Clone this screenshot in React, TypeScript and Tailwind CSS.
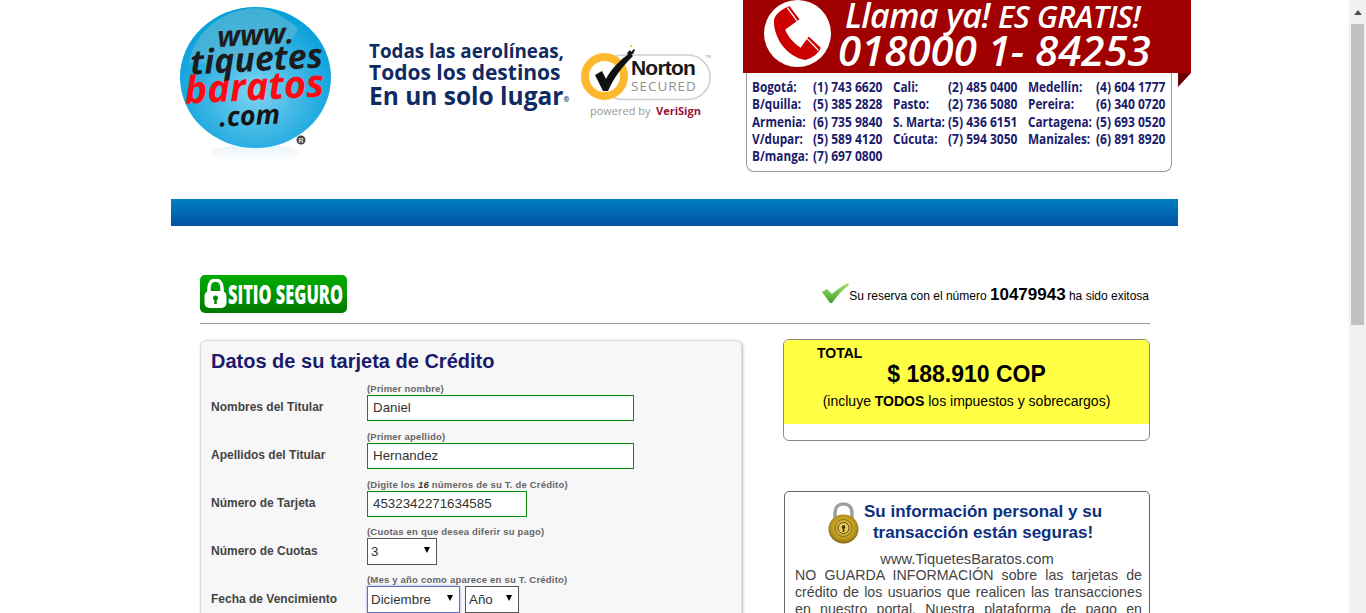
import React from 'react';

const phones = [
  ['Bogotá:', '(1) 743 6620', 'Cali:', '(2) 485 0400', 'Medellín:', '(4) 604 1777'],
  ['B/quilla:', '(5) 385 2828', 'Pasto:', '(2) 736 5080', 'Pereira:', '(6) 340 0720'],
  ['Armenia:', '(6) 735 9840', 'S. Marta:', '(5) 436 6151', 'Cartagena:', '(5) 693 0520'],
  ['V/dupar:', '(5) 589 4120', 'Cúcuta:', '(7) 594 3050', 'Manizales:', '(6) 891 8920'],
  ['B/manga:', '(7) 697 0800'],
];

function Logo() {
  return (
    <svg width="165" height="165" viewBox="175 0 165 165" className="shrink-0">
      <defs>
        <radialGradient id="globe" cx="50%" cy="60%" r="58%">
          <stop offset="0%" stopColor="#7fd4f2" />
          <stop offset="65%" stopColor="#2fb0e2" />
          <stop offset="100%" stopColor="#05a0d8" />
        </radialGradient>
        <linearGradient id="shine" x1="0" y1="0" x2="0" y2="1">
          <stop offset="0%" stopColor="#e8f4f9" />
          <stop offset="100%" stopColor="#ffffff" />
        </linearGradient>
      </defs>
      <ellipse cx="255" cy="153" rx="44" ry="8" fill="url(#shine)" />
      <ellipse cx="255.5" cy="77.5" rx="75.5" ry="70.5" fill="url(#globe)" />
      <path d="M189 62 C196 30 222 10 255 8 C274 8 290 22 298 28 C292 50 262 52 240 58 C220 63 200 66 189 62Z" fill="#58b6d6" opacity="0.7" />
      <g fontFamily="'Open Sans',sans-serif" fontStyle="italic" textAnchor="middle">
        <text x="256" y="45" fontSize="29" fontWeight="700" fill="#1c1c1c" transform="rotate(-3 256 45)">www.</text>
        <text x="257" y="71" fontSize="34" fontWeight="700" fill="#1c1c1c" transform="rotate(-3 257 71)">tiquetes</text>
        <text x="255" y="100" fontSize="38" fontWeight="700" fill="#ff0a12" transform="rotate(-3 255 100)">baratos</text>
        <text x="250" y="125" fontSize="27" fontWeight="700" fill="#151515" transform="rotate(-3 250 125)">.com</text>
      </g>
      <circle cx="301" cy="140" r="4.500" fill="#444" />
      <text x="301" y="142.500" textAnchor="middle" fontSize="7" fontWeight="700" fontFamily="'Liberation Sans',sans-serif" fill="#ddd">R</text>
    </svg>
  );
}

function NortonSeal() {
  return (
    <svg width="132" height="76" viewBox="581 43 132 76" className="shrink-0">
      <rect x="601" y="55" width="109" height="44.500" rx="22" fill="#fff" stroke="#cfcfcf" strokeWidth="1.600" />
      <circle cx="604.500" cy="76.500" r="19.500" fill="#fff" stroke="#fdb92e" strokeWidth="8" />
      <path d="M595 75 L602 71 L606 79 C611 69 620 60 630 53 L633 56 C623 66 614 77 608 91 L603 91Z" fill="#111" />
      <path d="M627 53 l3-3 l1 2 l3-3 l1 1 l-2 4 l-3 1 l-1 1Z" fill="#111" />
      <circle cx="631" cy="46" r="1" fill="#e8b020" />
      <text x="631" y="75" fontFamily="'Liberation Sans',sans-serif" fontWeight="700" fontSize="21" letterSpacing="-0.800" fill="#1a1a1a">Norton</text>
      <text x="631" y="91" fontFamily="'Open Sans',sans-serif" fontSize="13.500" letterSpacing="1" fill="#8f8f8f">SECURED</text>
      <text x="705" y="58" fontFamily="'Liberation Sans',sans-serif" fontSize="4" fill="#999">TM</text>
      <text x="590" y="115" fontFamily="'Open Sans',sans-serif" fontSize="11" fill="#9a9a9a">powered by</text>
      <text x="656" y="115" fontFamily="'Open Sans',sans-serif" fontSize="11" fontWeight="700" fill="#96123f">VeriSign</text>
    </svg>
  );
}

function CallBanner() {
  return (
    <div className="relative w-[448px] -mr-[13px] shrink-0">
      <div className="flex h-[73px] bg-[#a00000] pl-[21px] text-white font-['Open_Sans',sans-serif] italic">
        <svg width="67" height="67" viewBox="0 0 66 66" className="shrink-0">
          <circle cx="33" cy="33" r="33" fill="#fff" />
          <path d="M10 19 C12 13 18 9 25 6 L35 19 L21 29 C23 36 30 43 36 47 L44 36 L56 47 C53 54 47 57 41 59 C32 58 22 51 16 42 C12 35 9 26 10 19Z" fill="#cc0000" />
          <path d="M23 7.500 L32.500 20.500 M42.500 38 L53.500 49.500" stroke="#fff" strokeWidth="1.200" />
        </svg>
        <div className="ml-[7px] flex flex-col">
          <div className="flex items-baseline pl-[7px] h-[31px] leading-[31px] whitespace-nowrap font-semibold">
            <span className="text-[34px] tracking-[-0.6px]">Llama ya!</span>
            <span className="ml-[8px] text-[31px] tracking-[-0.6px]">ES GRATIS!</span>
          </div>
          <div className="text-[42px] leading-[38px] font-semibold whitespace-nowrap">018000 1- 84253</div>
        </div>
      </div>
      <div className="absolute right-0 top-[73px] w-0 h-0 border-t-[14px] border-t-[#6d0000] border-r-[13px] border-r-transparent" />
      <div className="ml-[3px] w-[426px] h-[99px] bg-white border-x border-b border-[#999] rounded-b-[8px] pl-[5px] pt-[5px] grid grid-cols-[61px_80px_55px_80px_68px_70px] auto-rows-[17.300px] text-[14px] leading-[17px] font-bold text-[#1b1b6b] font-['Open_Sans',sans-serif] whitespace-nowrap">
        {phones.flat().map((t, i) => (
          <span key={i} className={`origin-left inline-block ${i % 2 === 0 ? 'scale-x-[0.84]' : 'scale-x-[0.86]'}`}>{t}</span>
        ))}
      </div>
    </div>
  );
}

function LockBadge() {
  return (
    <div className="flex items-center w-[147px] h-[38px] rounded-[5px] bg-linear-to-b from-[#00ad00] to-[#007a00] pl-[4px]">
      <svg width="23" height="30" viewBox="0 0 23 30" className="shrink-0">
        <path d="M5 13 V9 C5 4 8 1 11.500 1 C15 1 18 4 18 9 V13" fill="none" stroke="#fff" strokeWidth="3.500" />
        <rect x="0.500" y="12" width="22" height="17" rx="5" fill="#fff" />
        <circle cx="11.500" cy="19" r="2.500" fill="#008a00" />
        <rect x="10.300" y="20" width="2.400" height="5" fill="#008a00" />
      </svg>
      <span className="ml-[1px] shrink-0 text-white text-[26px] font-extrabold font-['Open_Sans',sans-serif] origin-left scale-x-[0.63] whitespace-nowrap">SITIO SEGURO</span>
    </div>
  );
}

function Check() {
  return (
    <svg width="27" height="20" viewBox="0 0 27 20" className="shrink-0">
      <defs>
        <linearGradient id="chk" x1="0" y1="0" x2="0" y2="1">
          <stop offset="0%" stopColor="#a6e36a" />
          <stop offset="100%" stopColor="#3f9f2a" />
        </linearGradient>
      </defs>
      <path d="M0 9 L5 6 L10 11 C14 7 20 3 26 0 L27 2 C20 7 15 13 10 20 L8 20Z" fill="url(#chk)" />
    </svg>
  );
}

function GoldLock() {
  return (
    <svg width="31" height="42" viewBox="0 0 31 42" className="shrink-0">
      <defs>
        <radialGradient id="gold" cx="50%" cy="45%" r="60%">
          <stop offset="0%" stopColor="#f0d860" />
          <stop offset="70%" stopColor="#b8931c" />
          <stop offset="100%" stopColor="#6f5510" />
        </radialGradient>
      </defs>
      <path d="M7 18 V11 C7 5 10.500 2 15.500 2 C20.500 2 24 5 24 11 V18" fill="none" stroke="#a0a0a0" strokeWidth="3.500" />
      <ellipse cx="15.500" cy="27" rx="15" ry="14.500" fill="url(#gold)" />
      <circle cx="15.500" cy="26" r="8.500" fill="none" stroke="#8a6c14" strokeWidth="1" />
      <circle cx="15.500" cy="26" r="5.500" fill="#e6cc58" stroke="#5f480c" strokeWidth="1" />
      <circle cx="15.500" cy="25" r="1.800" fill="#3f2f08" />
      <rect x="14.700" y="25" width="1.600" height="5" fill="#3f2f08" />
    </svg>
  );
}

function Row({ label, hint, children }: { label: string; hint: React.ReactNode; children: React.ReactNode }) {
  return (
    <div className="flex h-[48px] items-end">
      <div className="w-[156px] h-[26px] mb-[1px] flex items-center text-[12px] font-bold text-[#444] whitespace-nowrap">{label}</div>
      <div>
        <div className="text-[9.500px] leading-[11px] mb-[1px] font-bold text-[#666] tracking-[0.2px] whitespace-nowrap">{hint}</div>
        <div className="flex gap-[5px]">{children}</div>
      </div>
    </div>
  );
}

function Field({ value, width }: { value: string; width: string }) {
  return (
    <input
      readOnly
      defaultValue={value}
      className={`${width} h-[26px] bg-white border border-[#0c8a0c] px-[5px] pb-[2px] text-[13.330px] text-[#333] outline-none`}
    />
  );
}

function Select({ value, width, focus }: { value: string; width: string; focus?: boolean }) {
  return (
    <div className={`relative ${width}`}>
      <select className={`appearance-none w-full h-[27px] bg-white border pl-[3px] text-[13.330px] text-[#333] ${focus ? 'border-[#5c6fc0] shadow-[0_0_2px_#8a9ae0]' : 'border-[#555]'}`}>
        <option>{value}</option>
      </select>
      <div className="absolute right-[7px] top-[9px] w-0 h-0 border-x-[3.500px] border-x-transparent border-t-[6px] border-t-black pointer-events-none" />
    </div>
  );
}

export default function App() {
  return (
    <div className="flex h-screen overflow-hidden bg-white font-['Liberation_Sans',Arial,sans-serif]">
      <main className="flex-1 min-w-0">
        <div className="w-[1007px] mx-auto">
          <header className="flex items-start h-[199px] pl-[4px]">
            <Logo />
            <div className="ml-[29px] w-[200px] pt-[39px] font-['Open_Sans',sans-serif] font-bold text-[#0f2b63] whitespace-nowrap">
              <div className="text-[20px] leading-[23px] origin-left scale-x-[0.94]">Todas las aerolíneas,</div>
              <div className="text-[21px] leading-[21px] origin-left scale-x-[1.0]">Todos los destinos</div>
              <div className="text-[25px] leading-[24px] origin-left scale-x-[0.98]">En un solo lugar<sup className="text-[7px]">®</sup></div>
            </div>
            <div className="ml-[12px] pt-[43px]">
              <NortonSeal />
            </div>
            <div className="ml-[30px]">
              <CallBanner />
            </div>
          </header>
          <div className="h-[27px] bg-linear-to-b from-[#0080c0] to-[#0050a5]" />
          <section className="pl-[29px] pr-[28px] pt-[49px]">
            <div className="flex items-start justify-between h-[49px] border-b border-[#999]">
              <LockBadge />
              <div className="flex items-end pt-[8px] mr-[1px] text-[12px] text-black whitespace-nowrap">
                <Check />
                <span className="leading-[14px]">Su reserva con el número <b className="text-[17px] leading-[14px]">10479943</b> ha sido exitosa</span>
              </div>
            </div>
            <div className="flex items-start gap-[41px] pt-[16px]">
              <div className="w-[542px] shrink-0 h-[300px] bg-[#f7f7f7] border border-[#ddd] rounded-[6px] shadow-[1px_1px_3px_#bbb] px-[10px] pt-[9px]">
                <h2 className="text-[20px] leading-[23px] font-bold text-[#1b1b6b]">Datos de su tarjeta de Crédito</h2>
                <Row label="Nombres del Titular" hint="(Primer nombre)">
                  <Field value="Daniel" width="w-[267px]" />
                </Row>
                <Row label="Apellidos del Titular" hint="(Primer apellido)">
                  <Field value="Hernandez" width="w-[267px]" />
                </Row>
                <Row label="Número de Tarjeta" hint={<>(Digite los <i className="text-[#333]">16</i> números de su T. de Crédito)</>}>
                  <Field value="4532342271634585" width="w-[160px]" />
                </Row>
                <Row label="Número de Cuotas" hint="(Cuotas en que desea diferir su pago)">
                  <Select value="3" width="w-[70px]" />
                </Row>
                <Row label="Fecha de Vencimiento" hint="(Mes y año como aparece en su T. Crédito)">
                  <Select value="Diciembre" width="w-[93px]" focus />
                  <Select value="Año" width="w-[54px]" />
                </Row>
              </div>
              <div className="w-[367px] shrink-0 -mt-[1px]">
                <div className="h-[102px] rounded-[6px] border border-[#888] overflow-hidden bg-white">
                  <div className="h-[84px] bg-[#ffff44] text-black">
                    <div className="pl-[33px] pt-[6px] text-[14px] leading-[15px] font-bold">TOTAL</div>
                    <div className="text-center text-[23px] leading-[28px] font-bold -mt-[1px]">$ 188.910 COP</div>
                    <div className="text-center text-[14px] leading-[16px] mt-[5px]">(incluye <b>TODOS</b> los impuestos y sobrecargos)</div>
                  </div>
                </div>
                <div className="mt-[50px] ml-[1px] h-[200px] rounded-[5px] border border-[#666] pl-[10px] pr-[7px] pt-[10px] overflow-hidden">
                  <div className="flex items-start pl-[33px]">
                    <GoldLock />
                    <h3 className="flex-1 text-center text-[17px] leading-[20.500px] font-bold text-[#0c3080] pr-[35px]">Su información personal y su transacción están seguras!</h3>
                  </div>
                  <p className="text-center text-[14.700px] leading-[16px] text-[#444] mt-[7px] pr-[3px]">www.TiquetesBaratos.com</p>
                  <p className="text-[14.200px] leading-[17px] text-[#444] text-justify [text-align-last:justify]">NO GUARDA INFORMACIÓN sobre las tarjetas de crédito de los usuarios que realicen las transacciones en nuestro portal. Nuestra plataforma de pago en</p>
                </div>
              </div>
            </div>
          </section>
        </div>
      </main>
      <aside className="w-[17px] shrink-0 bg-[#f1f1f1] flex flex-col items-center">
        <div className="h-[24px] flex items-center justify-center">
          <div className="w-0 h-0 border-x-[4px] border-x-transparent border-b-[5px] border-b-[#505050]" />
        </div>
        <div className="w-[13px] h-[301px] bg-[#c1c1c1]" />
      </aside>
    </div>
  );
}
